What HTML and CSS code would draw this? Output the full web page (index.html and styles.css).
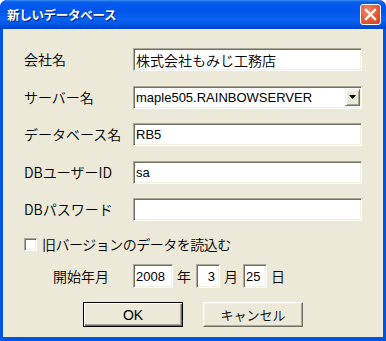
FILE: index.html
```html
<!DOCTYPE html>
<html lang="ja">
<head>
<meta charset="utf-8">
<title>新しいデータベース</title>
<link rel="stylesheet" href="styles.css">
</head>
<body>
<div class="window">
  <div class="titlebar">
    <span class="title">新しいデータベース</span>
    <span class="close" aria-label="閉じる">
      <svg width="13" height="13" viewBox="0 0 13 13"><path d="M2 2 L11 11 M11 2 L2 11" stroke="#fff" stroke-width="2.4" stroke-linecap="square"/></svg>
    </span>
  </div>
  <div class="client">
    <div class="form">
      <span class="lbl">会社名</span>
      <div class="edit">株式会社もみじ工務店</div>
      <span class="lbl">サーバー名</span>
      <div class="edit combo"><span class="latin">maple505.RAINBOWSERVER</span>
        <span class="drop"><svg width="7" height="4" viewBox="0 0 7 4"><path d="M0 0 H7 L3.5 4 Z" fill="#000"/></svg></span>
      </div>
      <span class="lbl">データベース名</span>
      <div class="edit"><span class="latin">RB5</span></div>
      <span class="lbl">DBユーザーID</span>
      <div class="edit"><span class="latin">sa</span></div>
      <span class="lbl">DBパスワード</span>
      <div class="edit"></div>
    </div>
    <div class="check-row">
      <span class="checkbox"></span>
      <span class="check-text">旧バージョンのデータを読込む</span>
    </div>
    <div class="date-row">
      <span class="date-lbl">開始年月</span>
      <div class="edit small year"><span class="latin">2008</span></div>
      <span class="unit">年</span>
      <div class="edit small month"><span class="latin">3</span></div>
      <span class="unit">月</span>
      <div class="edit small day"><span class="latin">25</span></div>
      <span class="unit">日</span>
    </div>
    <div class="buttons">
      <div class="btn default"><span class="latin">OK</span></div>
      <div class="btn">キャンセル</div>
    </div>
  </div>
</div>
</body>
</html>
```
FILE: styles.css
```css
* { box-sizing: border-box; }
html, body { margin: 0; padding: 0; background: #fff; }
body {
  font-family: "Noto Sans CJK JP", "Liberation Sans", sans-serif;
  font-size: 14px;
  font-weight: 350;
  color: #000;
}
.window {
  width: 386px;
  height: 341px;
  display: flex;
  flex-direction: column;
  background: #0055e5;
  border-radius: 7px 7px 0 0;
  overflow: hidden;
}
.titlebar {
  height: 29px;
  flex: none;
  display: flex;
  align-items: center;
  justify-content: space-between;
  padding: 0 5px 1px 7px;
  background: linear-gradient(to bottom, #3b8cf5 0, #0a5fe8 2px, #0058ee 5px, #0156ea 12px, #0a63f3 19px, #0058e7 24px, #0049d4 27px, #0043c6 29px);
}
.title {
  color: #fff;
  font-weight: bold;
  font-size: 12.5px;
  letter-spacing: -0.3px;
  text-shadow: 1px 1px 0 #0a1c7a;
}
.close {
  width: 21px;
  height: 21px;
  border: 1px solid #fff;
  border-radius: 3px;
  background: radial-gradient(circle at 35% 30%, #f28a6c 0, #e5603c 45%, #cf3d1c 100%);
  display: flex;
  align-items: center;
  justify-content: center;
}
.client {
  flex: 1;
  margin: 0 3px 4px 3px;
  background: #ece9d8;
  padding: 19px 0 0 21px;
  display: flex;
  flex-direction: column;
}
.form {
  display: grid;
  grid-template-columns: 109px 229px;
  grid-auto-rows: 23px;
  row-gap: 14.5px;
  align-items: center;
}
.lbl { line-height: 23px; white-space: nowrap; }
.latin { font-family: "Liberation Sans", sans-serif; font-size: 13px; font-weight: normal; }
.edit {
  height: 23px;
  background: #fff;
  border-top: 1px solid #aca899;
  border-left: 1px solid #aca899;
  border-right: 1px solid #fff;
  border-bottom: 1px solid #fff;
  box-shadow: inset 1px 1px 0 #716f64, inset -1px -1px 0 #f1efe2;
  padding: 0 3px 0 2px;
  display: flex;
  align-items: center;
  white-space: nowrap;
  line-height: 1;
}
.combo { justify-content: space-between; padding-right: 1px; }
.drop {
  width: 15px;
  height: 17px;
  background: #ece9d8;
  border-top: 1px solid #f1efe2;
  border-left: 1px solid #f1efe2;
  border-right: 1px solid #716f64;
  border-bottom: 1px solid #716f64;
  box-shadow: inset 1px 1px 0 #fff, inset -1px -1px 0 #aca899;
  display: flex;
  align-items: center;
  justify-content: center;
}
.check-row {
  margin-top: 16px;
  height: 14px;
  display: flex;
  align-items: center;
  gap: 5px;
}
.checkbox {
  width: 13px;
  height: 13px;
  background: #fff;
  border-top: 1px solid #aca899;
  border-left: 1px solid #aca899;
  border-right: 1px solid #fff;
  border-bottom: 1px solid #fff;
  box-shadow: inset 1px 1px 0 #716f64, inset -1px -1px 0 #f1efe2;
}
.check-text { letter-spacing: -0.5px; }
.date-row {
  margin-top: 13px;
  padding-left: 29px;
  display: flex;
  align-items: center;
  height: 24px;
}
.date-lbl { width: 80px; }
.edit.small { height: 24px; padding: 0 2px; }
.year { width: 40px; }
.edit.month { width: 24px; justify-content: flex-end; padding-right: 4px; }
.day { width: 24px; }
.unit { margin: 0 5px 0 4px; }
.buttons {
  margin-top: 14px;
  padding-left: 59px;
  display: flex;
  gap: 20px;
}
.btn {
  width: 100px;
  height: 25px;
  background: #ece9d8;
  border-top: 1px solid #fff;
  border-left: 1px solid #fff;
  border-right: 1px solid #716f64;
  border-bottom: 1px solid #716f64;
  box-shadow: inset -1px -1px 0 #aca899, inset 1px 1px 0 #f1efe2;
  display: flex;
  align-items: center;
  justify-content: center;
  font-size: 13px;
}
.btn.default {
  border: 1px solid #000;
  box-shadow: inset 1px 1px 0 #fff, inset -1px -1px 0 #716f64, inset -2px -2px 0 #aca899;
}
.btn .latin { font-size: 14px; }
```
